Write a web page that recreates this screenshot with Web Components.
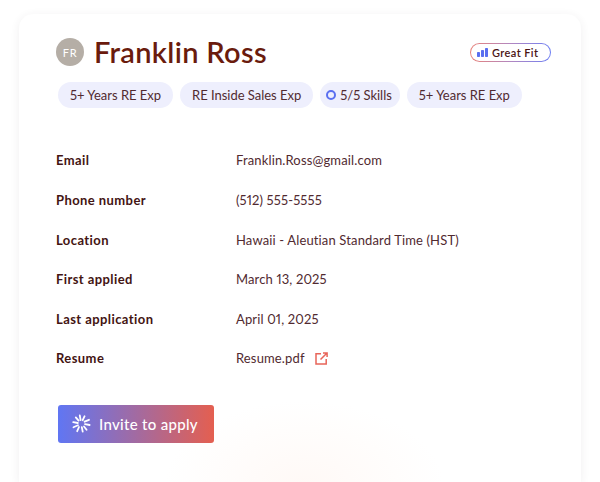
<!DOCTYPE html>
<html><head><meta charset="utf-8"><style>
html,body{margin:0;height:482px;overflow:hidden;background:#fff;font-family:Lato,sans-serif}
</style></head><body>
<template id="t-card"><style>
:host{display:block;box-sizing:border-box;margin:14px 19px 0;height:468px;padding:23px 30px 0 37px;border-radius:14px 14px 0 0;color:#4a1a17;
background:radial-gradient(ellipse 140px 85px at 285px 472px,#fff9f6,rgba(255,255,255,0) 100%),#fff;
box-shadow:0 2px 10px rgba(60,50,60,.08)}
.head{display:flex;align-items:center;height:30px}
.grow{flex:1}
.chips{display:flex;gap:7px;margin:15px 0 0 2px}
.rows{margin-top:32.6px;display:flex;flex-direction:column;gap:0}
.cta{margin:27.3px 0 0 2px}
</style>
<div class="head"><slot name="avatar"></slot><slot name="title"></slot><span class="grow"></span><slot name="badge"></slot></div>
<div class="chips"><slot name="chip"></slot></div>
<div class="rows"><slot name="row"></slot></div>
<div class="cta"><slot name="cta"></slot></div>
</template>

<template id="t-avatar"><style>
:host{display:flex;align-items:center;justify-content:center;width:28px;height:28px;border-radius:50%;background:#b5aea6;color:#fff;font:400 11px Lato,sans-serif;letter-spacing:.6px;margin-right:10px}
</style><slot></slot></template>

<template id="t-title"><style>
:host{display:block;font:600 29px/30px Lato,sans-serif;color:#6a1b0d;letter-spacing:.33px}
</style><slot></slot></template>

<template id="t-badge"><style>
:host{display:flex;align-items:center;gap:4px;box-sizing:border-box;width:81px;height:19px;padding-left:6px;border-radius:10px;border:1px solid transparent;
background:linear-gradient(#fff,#fff) padding-box,linear-gradient(90deg,#e9837a,#b287c0 50%,#6f80f4) border-box;font:600 11px Lato,sans-serif;letter-spacing:.4px;color:#4a1414}
svg{display:block;flex:none}
</style><svg width="11" height="9" viewBox="0 0 11 9"><rect x="0" y="4" width="3" height="5" rx=".7" fill="#5a6ff0"/><rect x="4" y="2" width="3" height="7" rx=".7" fill="#5a6ff0"/><rect x="8" y="0" width="3" height="9" rx=".7" fill="#5a6ff0"/></svg><slot></slot></template>

<template id="t-chip"><style>
:host{display:flex;align-items:center;height:26px;padding:0 12px;border-radius:13px;background:#eeeffd;font:400 13px Lato,sans-serif;font-variant-numeric:proportional-nums;letter-spacing:-.02px;color:#512a30}
:host([icon]){padding:0 8px 0 6px;gap:4px}
.ring{display:none;width:10px;height:10px;box-sizing:border-box;border:2px solid #5a6ff0;border-radius:50%}
:host([icon]) .ring{display:block}
</style><span class="ring"></span><slot></slot></template>

<template id="t-row"><style>
:host{display:grid;grid-template-columns:180px 1fr;align-items:center;height:39.6px;font:400 13px Lato,sans-serif;font-variant-numeric:proportional-nums;letter-spacing:.14px;color:#512a30}
.k{font-weight:700;color:#431412;letter-spacing:.42px}
.v{display:flex;align-items:center;gap:10px}
</style><div class="k"><slot name="k"></slot></div><div class="v"><slot></slot></div></template>

<template id="t-cta"><style>
:host{display:inline-flex;align-items:center;gap:8px;box-sizing:border-box;width:156px;height:38px;padding:0 0 1px 14px;border-radius:3px;background:linear-gradient(90deg,#6076f3,#e45f50);color:#fff;font:500 15px Lato,sans-serif;letter-spacing:.3px}
svg{display:block;flex:none}
</style><svg width="19" height="19" viewBox="0 0 19 19" fill="none" stroke="#fff" stroke-width="1.8" stroke-linecap="round"><path d="M7.8 1.5L8.6 6M12.6 2.2L10.7 6.2M17 5.8L12.6 7.7M17.6 11L13 10.2M14.6 15.8L12 12.5M10.7 17.6L9.8 13.2M5.2 17.2L7 13M1.5 13.3L6 11.3M1.2 8.2L5.8 9M3.8 3.4L6.6 6.6"/></svg><slot></slot></template>

<script>
for (const [n,t] of [['x-card','t-card'],['x-avatar','t-avatar'],['x-title','t-title'],['x-badge','t-badge'],['x-chip','t-chip'],['x-row','t-row'],['x-cta','t-cta']]) {
  customElements.define(n,class extends HTMLElement{constructor(){super();this.attachShadow({mode:'open'}).appendChild(document.getElementById(t).content.cloneNode(true));}});
}
</script>
<x-card>
<x-avatar slot="avatar">FR</x-avatar>
<x-title slot="title">Franklin Ross</x-title>
<x-badge slot="badge">Great Fit</x-badge>
<x-chip slot="chip">5+ Years RE Exp</x-chip>
<x-chip slot="chip">RE Inside Sales Exp</x-chip>
<x-chip slot="chip" icon>5/5 Skills</x-chip>
<x-chip slot="chip">5+ Years RE Exp</x-chip>
<x-row slot="row"><span slot="k">Email</span>Franklin.Ross@gmail.com</x-row>
<x-row slot="row"><span slot="k">Phone number</span>(512) 555-5555</x-row>
<x-row slot="row"><span slot="k">Location</span>Hawaii - Aleutian Standard Time (HST)</x-row>
<x-row slot="row"><span slot="k">First applied</span>March 13, 2025</x-row>
<x-row slot="row"><span slot="k">Last application</span>April 01, 2025</x-row>
<x-row slot="row"><span slot="k">Resume</span><span>Resume.pdf</span><svg width="13" height="13" viewBox="0 0 13 13" fill="none" stroke="#e8655a" stroke-width="1.5"><path d="M6 1.7H1v10.2h10.2V7"/><path d="M5.5 7.5L12 1M8 .9h4.1V5"/></svg></x-row>
<x-cta slot="cta">Invite to apply</x-cta>
</x-card>
</body></html>
